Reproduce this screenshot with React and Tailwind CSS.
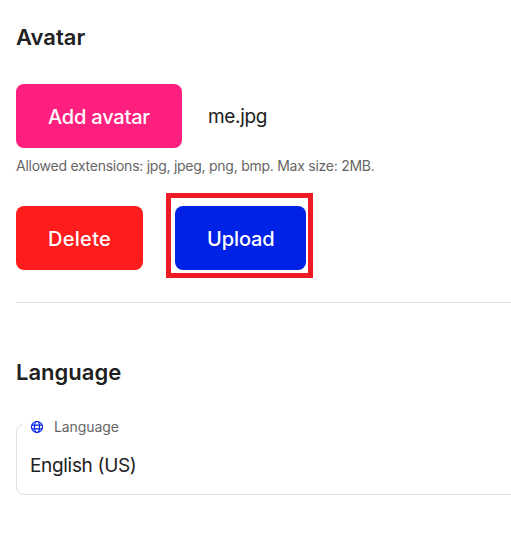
const button =
  "flex h-16 items-center rounded-lg pt-[2px] pl-8 text-xl font-medium text-white whitespace-nowrap";

function GlobeIcon() {
  return (
    <svg viewBox="0 0 14 14" className="size-[14px] fill-none stroke-[#0022e6] stroke-[1.2px]">
      <circle cx="7" cy="7" r="5.5" />
      <ellipse cx="7" cy="7" rx="2.5" ry="5.5" />
      <path d="M1.8 5.1h10.4M1.8 8.9h10.4" />
    </svg>
  );
}

export default function App() {
  return (
    <main className="h-[544px] w-full overflow-hidden bg-white pl-4 font-['Inter',sans-serif] text-[#212121]">
      <section className="border-b border-[#e0e0e0] pt-[22px] pb-8">
        <h2 className="h-[30px] text-[22px] leading-[30px] font-semibold tracking-[0px]">Avatar</h2>

        <div className="mt-8 flex items-center">
          <button className={`${button} w-[166px] bg-[#ff1f7e] tracking-[-0.2px]`}>Add avatar</button>
          <span className="ml-[26px] pt-[2px] text-[19px] tracking-[-0.35px]">me.jpg</span>
        </div>

        <p className="mt-2 h-5 text-sm leading-5 tracking-[-0.26px] whitespace-nowrap text-[#666]">
          Allowed extensions: jpg, jpeg, png, bmp. Max size: 2MB.
        </p>

        <div className="mt-[17px] -mb-2 flex items-start">
          <button className={`${button} mt-[13px] w-[127px] bg-[#ff1c1c] tracking-[0.3px]`}>Delete</button>
          <div className="ml-[23px] h-[85px] w-[147px] border-5 border-[#ed1c24] pt-2 pl-1">
            <button className={`${button} w-[131px] bg-[#0022e6] tracking-[-0.1px]`}>Upload</button>
          </div>
        </div>
      </section>

      <section className="pt-[54px]">
        <h2 className="h-[30px] text-[22px] leading-[30px] font-semibold tracking-[0px]">Language</h2>

        <fieldset className="mt-[27px] -mr-3 h-[81px] rounded-lg border border-[#e0e0e0] pl-[6px]">
          <legend className="flex h-5 w-full items-center pt-[6px] pl-[7px]">
            <GlobeIcon />
            <span className="ml-[10px] text-sm tracking-[-0.1px] text-[#666]">Language</span>
          </legend>
          <div className="mt-[18px] pl-[7px] text-[19px] leading-7 tracking-[-0.32px]">English (US)</div>
        </fieldset>
      </section>
    </main>
  );
}
